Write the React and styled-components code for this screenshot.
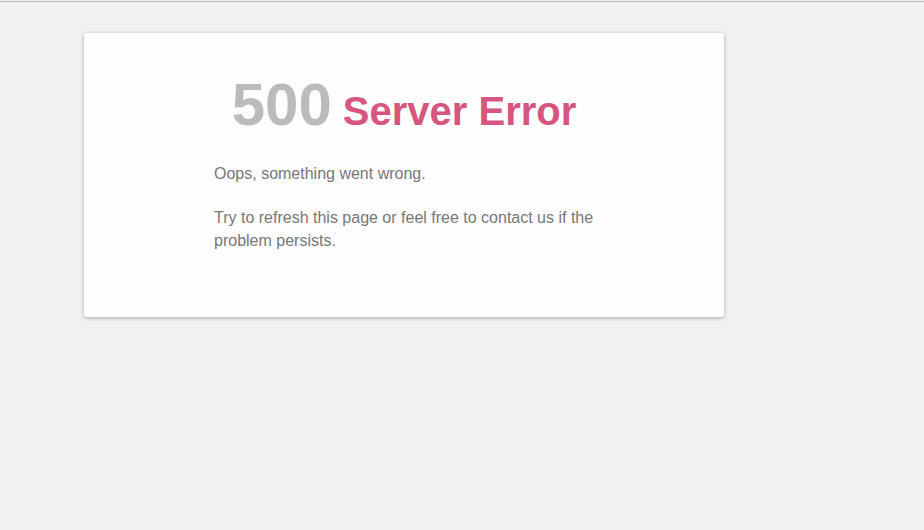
import React from 'react'
import styled, { createGlobalStyle } from 'styled-components'

const GlobalStyle = createGlobalStyle`
    html, body {
        margin: 0;
        padding: 0;
        background-color: #f1f1f1;
        font-family: 'Liberation Sans', Arial, sans-serif;
    }
`

const App = () => {
    return (
        <>
            <GlobalStyle />
            <Page>
                <TopRule />
                <Card>
                    <Title>
                        <Code>500</Code><Label> Server Error</Label>
                    </Title>
                    <Message>
                        <p>Oops, something went wrong.</p>
                        <p>Try to refresh this page or feel free to contact us if the problem persists.</p>
                    </Message>
                </Card>
            </Page>
        </>
    )
}

const Page = styled.div`
    min-height: 530px;
    padding-top: 1px;
    box-sizing: border-box;
`

const TopRule = styled.div`
    height: 1px;
    background-color: #b9b9b9;
`

const Card = styled.div`
    width: 640px;
    margin: 31px 0 0 84px;
    padding: 42px 0 65px;
    box-sizing: border-box;
    background-color: #fdfdfd;
    border-radius: 3px;
    box-shadow: 0 1px 4px rgba(0, 0, 0, 0.32);
`

const Title = styled.h1`
    margin: 0;
    text-align: center;
    font-size: 60px;
    line-height: 1;
    font-weight: 700;
`

const Code = styled.span`
    color: #bbbbbb;
    font-size: 60px;
`

const Label = styled.span`
    color: #d6567f;
    font-size: 40px;
`

const Message = styled.div`
    width: 380px;
    margin: 27px auto 0;
    color: #777777;
    font-size: 16px;
    line-height: 23px;

    p {
        margin: 0 0 21px;
    }
    p:last-child {
        margin-bottom: 0;
    }
`

export default App
